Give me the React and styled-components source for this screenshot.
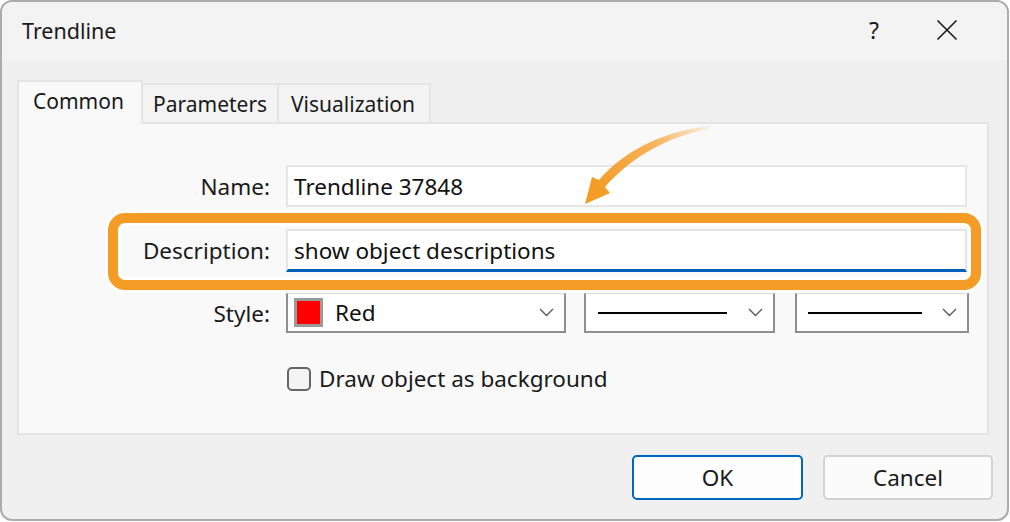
import React from "react";
import styled, { createGlobalStyle } from "styled-components";

const Global = createGlobalStyle`
  html, body { margin: 0; padding: 0; background: #ffffff; }
  body { font-family: "Noto Sans", "Open Sans", sans-serif; color: #1b1b1b; }
  * { box-sizing: border-box; }
`;

const Window = styled.div`
  position: relative;
  width: 1009px;
  height: 521px;
  border: 2px solid #acacac;
  border-radius: 12px;
  background: #f0f0f0;
  overflow: hidden;
  display: flex;
  flex-direction: column;
  font-size: 22px;
`;

const TitleBar = styled.div`
  height: 58px;
  background: #f3f3f4;
  display: flex;
  align-items: center;
  padding: 0 0 2px 20px;
`;

const Title = styled.div`
  flex: 1;
  font-size: 21.5px;
  color: #1a1a1a;
`;

const TitleButton = styled.div`
  width: ${(p) => p.$w}px;
  display: flex;
  justify-content: center;
  align-items: center;
  color: #1a1a1a;
  font-size: 23px;
`;

const Content = styled.div`
  padding: 20px 18px 0 15px;
  display: flex;
  flex-direction: column;
`;

const TabStrip = styled.div`
  display: flex;
  align-items: flex-end;
  margin-bottom: -2px;
  position: relative;
  z-index: 1;
`;

const Tab = styled.div`
  height: ${(p) => (p.$active ? 44 : 39)}px;
  margin-bottom: ${(p) => (p.$active ? 0 : 2)}px;
  width: ${(p) => p.$w}px;
  background: ${(p) => (p.$active ? "#f9f9f9" : "#f3f3f3")};
  border: 2px solid #e4e4e4;
  border-bottom: none;
  border-left: ${(p) => (p.$active ? "2px solid #e4e4e4" : "none")};
  display: flex;
  align-items: center;
  padding-left: ${(p) => p.$pl}px;
  padding-bottom: ${(p) => (p.$active ? 4 : 0)}px;
  font-size: 21px;
  color: #1a1a1a;
`;

const Panel = styled.div`
  height: 313px;
  background: #f9f9f9;
  border: 2px solid #e4e4e4;
  padding: 41px 20px 0 0;
  display: flex;
  flex-direction: column;
`;

const Row = styled.div`
  position: relative;
  display: grid;
  grid-template-columns: 251px 1fr;
  column-gap: 16px;
  align-items: center;
  height: ${(p) => p.$h}px;
  margin-bottom: ${(p) => p.$mb}px;
`;

const Highlight = styled.div`
  position: absolute;
  top: -16px;
  bottom: -18px;
  left: 89px;
  right: -14px;
  border: 10px solid #f49c26;
  border-radius: 17px;
  box-shadow: 0 0 0 3px #ffffff, inset 0 0 0 3px #ffffff;
  pointer-events: none;
  z-index: 2;
`;

const Label = styled.div`
  text-align: right;
  font-size: 22.5px;
  color: #1a1a1a;
`;

const TextField = styled.div`
  height: 100%;
  background: #ffffff;
  border: 2px solid #e6e6e6;
  border-bottom: ${(p) => (p.$focused ? "3px solid #005fb8" : "2px solid #e6e6e6")};
  display: flex;
  align-items: center;
  padding-left: 6px;
  font-size: 22.5px;
  color: #111;
`;

const Selects = styled.div`
  display: flex;
  height: 100%;
`;

const Select = styled.div`
  width: ${(p) => p.$w}px;
  margin-right: ${(p) => p.$mr}px;
  height: 100%;
  background: #ffffff;
  border: 2px solid #8f8f8f;
  border-top: 1px solid #dcdcdc;
  display: flex;
  align-items: center;
  padding: 0 10px 0 ${(p) => p.$pl}px;
`;

const Swatch = styled.div`
  width: 29px;
  height: 29px;
  background: #ff0000;
  border: 3px solid #9a9a9a;
  margin-right: 12px;
`;

const SelectText = styled.div`
  flex: 1;
  font-size: 22.5px;
  color: #111;
`;

const LineSample = styled.div`
  width: ${(p) => p.$w}px;
  height: 2px;
  background: #000;
  margin-right: auto;
`;

const CheckRow = styled.div`
  display: flex;
  align-items: center;
  margin-left: 268px;
  gap: 8px;
`;

const Checkbox = styled.div`
  width: 24px;
  height: 24px;
  border: 2px solid #666;
  border-radius: 5px;
  background: #f4f4f4;
`;

const CheckLabel = styled.div`
  font-size: 22.5px;
  color: #1a1a1a;
`;

const Footer = styled.div`
  display: flex;
  justify-content: flex-end;
  gap: 20px;
  padding: 20px 14px 0 0;
`;

const Button = styled.div`
  width: ${(p) => p.$w}px;
  height: 45px;
  border-radius: 5px;
  border: 2px solid ${(p) => (p.$primary ? "#0067c0" : "#d2d2d2")};
  background: ${(p) => (p.$primary ? "#fdfdfd" : "#fbfbfb")};
  display: flex;
  align-items: center;
  justify-content: center;
  font-size: 22.5px;
  color: #1a1a1a;
`;

const ArrowLayer = styled.svg`
  position: absolute;
  left: 0;
  top: 0;
  pointer-events: none;
  z-index: 3;
`;

const Chevron = () => (
  <svg width="15" height="9" viewBox="0 0 15 9">
    <path d="M1 1 L7.5 7.5 L14 1" fill="none" stroke="#5a5a5a" strokeWidth="1.4" />
  </svg>
);

export default function App() {
  return (
    <>
      <Global />
      <Window>
        <TitleBar>
          <Title>Trendline</Title>
          <TitleButton $w={26}>?</TitleButton>
          <TitleButton $w={120}>
            <svg width="22" height="22" viewBox="0 0 22 22">
              <path d="M1.5 1.5 L20.5 20.5 M20.5 1.5 L1.5 20.5" stroke="#1a1a1a" strokeWidth="1.6" />
            </svg>
          </TitleButton>
        </TitleBar>
        <Content>
          <TabStrip>
            <Tab $active $w={126} $pl={14}>Common</Tab>
            <Tab $w={136} $pl={10}>Parameters</Tab>
            <Tab $w={152} $pl={12}>Visualization</Tab>
          </TabStrip>
          <Panel>
            <Row $h={42} $mb={22}>
              <Label>Name:</Label>
              <TextField>Trendline 37848</TextField>
            </Row>
            <Row $h={43} $mb={21}>
              <Highlight />
              <Label>Description:</Label>
              <TextField $focused>show object descriptions</TextField>
            </Row>
            <Row $h={40} $mb={30}>
              <Label>Style:</Label>
              <Selects>
                <Select $w={280} $mr={18} $pl={6}>
                  <Swatch />
                  <SelectText>Red</SelectText>
                  <Chevron />
                </Select>
                <Select $w={191} $mr={20} $pl={12}>
                  <LineSample $w={129} />
                  <Chevron />
                </Select>
                <Select $w={174} $mr={0} $pl={11}>
                  <LineSample $w={114} />
                  <Chevron />
                </Select>
              </Selects>
            </Row>
            <CheckRow>
              <Checkbox />
              <CheckLabel>Draw object as background</CheckLabel>
            </CheckRow>
          </Panel>
        </Content>
        <Footer>
          <Button $primary $w={171}>OK</Button>
          <Button $w={170}>Cancel</Button>
        </Footer>
        <ArrowLayer width="1010" height="522" viewBox="0 0 1010 522">
          <defs>
            <linearGradient id="arrowGrad" x1="707" y1="125" x2="595" y2="185" gradientUnits="userSpaceOnUse">
              <stop offset="0" stopColor="#f49c26" stopOpacity="0.1" />
              <stop offset="0.45" stopColor="#f49c26" stopOpacity="0.75" />
              <stop offset="1" stopColor="#f49c26" stopOpacity="1" />
            </linearGradient>
          </defs>
          <path
            d="M 707 124 C 668 128 624 146 597 178 L 590 175 L 583 202 L 608 191 L 603 185 C 630 154 668 134 707 127 Z"
            fill="url(#arrowGrad)"
          />
        </ArrowLayer>
      </Window>
    </>
  );
}
